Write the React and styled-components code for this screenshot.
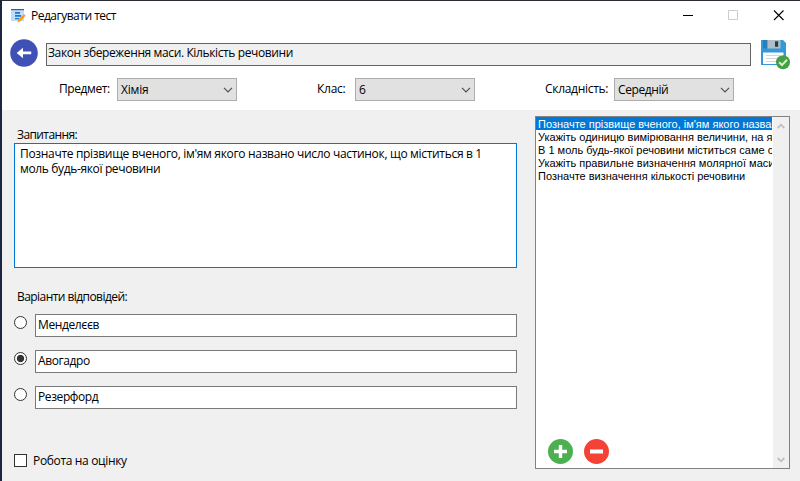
import React from 'react';
import styled, { createGlobalStyle } from 'styled-components';

const GlobalStyle = createGlobalStyle`
  * { box-sizing: border-box; }
  body { margin: 0; overflow: hidden; }
`;

const Window = styled.div`
  width: 800px;
  height: 481px;
  display: flex;
  flex-direction: column;
  border-top: 1px solid #2b2b33;
  border-left: 2px solid #1c2640;
  background: #f0f0f0;
  color: #000;
  font: 12px/15px 'Open Sans', 'Noto Sans', sans-serif;
`;

const Text = styled.span`
  white-space: pre;
  letter-spacing: ${(p) => p.$spacing || 0}px;
`;

const TitleBar = styled.header`
  height: 30px;
  display: flex;
  align-items: flex-start;
  padding: 8px 16px 0 9px;
  background: #fff;
`;

const Title = styled(Text)`
  margin: -1px 0 0 5px;
  flex: 1;
`;

const WindowButtons = styled.div`
  display: flex;
  gap: 34px;
  padding-top: 1px;
  svg { display: block; }
`;

const Header = styled.section`
  height: 79px;
  background: #fff;
`;

const NameRow = styled.div`
  height: 47px;
  display: flex;
  align-items: flex-start;
  padding: 8px 0 0 8px;
  svg { display: block; flex: none; }
`;

const NameField = styled.div`
  width: 705px;
  height: 23px;
  margin: 4px 10px 0 8px;
  padding: 1px 1px;
  border: 1px solid #646464;
  background: #f0f0f0;
`;

const SaveButton = styled.div`
  margin-top: 1px;
`;

const FilterRow = styled.div`
  display: grid;
  grid-template-columns: 58px 200px 38px 190px 69px 120px;
  padding-left: 57px;
`;

const FilterLabel = styled.div`
  padding-top: 3px;
`;

const Select = styled.div`
  width: 120px;
  height: 23px;
  display: flex;
  justify-content: space-between;
  align-items: center;
  padding: 0 3px;
  border: 1px solid #adadad;
  background: #e1e1e1;
`;

const Body = styled.main`
  flex: 1;
  display: flex;
  align-items: flex-start;
  padding: 6px 0 0 12px;
`;

const Editor = styled.section`
  width: 503px;
  margin-right: 18px;
  padding-top: 11px;
`;

const Caption = styled.div`
  height: 16px;
  padding-left: 3px;
`;

const QuestionField = styled.div`
  height: 125px;
  margin-bottom: 21px;
  padding: 2px 5px;
  border: 1px solid #0078d7;
  background: #fff;
  display: flex;
  flex-direction: column;
`;

const Answers = styled.div`
  display: grid;
  gap: 13px;
  margin-top: 9px;
`;

const Answer = styled.div`
  height: 23px;
  display: flex;
  gap: 8px;
`;

const Radio = styled.div`
  width: 13px;
  height: 13px;
  margin-top: 2px;
  border: 1px solid #333;
  border-radius: 50%;
  background: ${(p) => (p.$checked ? 'radial-gradient(circle, #333 3.3px, #fff 4.1px)' : '#fff')};
`;

const AnswerField = styled.div`
  flex: 1;
  padding: 2px;
  border: 1px solid #7a7a7a;
  background: #fff;
`;

const GradeOption = styled.div`
  display: flex;
  align-items: center;
  gap: 6px;
  margin-top: 44px;
`;

const Checkbox = styled.div`
  width: 13px;
  height: 13px;
  border: 1px solid #333;
  background: #fff;
`;

const ListBox = styled.section`
  width: 255px;
  height: 353px;
  display: flex;
  border: 1px solid #828282;
  background: #fff;
`;

const ListPane = styled.div`
  width: 236px;
  display: flex;
  flex-direction: column;
  font: 11px/15px 'Liberation Sans', Arial, sans-serif;
`;

const ListItem = styled.div`
  height: 13px;
  padding-left: 2px;
  overflow: hidden;
  color: ${(p) => (p.$selected ? '#fff' : '#000')};
  background: ${(p) => (p.$selected ? '#0078d7' : 'transparent')};
`;

const ListActions = styled.div`
  display: flex;
  gap: 11px;
  margin-top: auto;
  padding: 0 0 4px 12px;
`;

const ScrollBar = styled.div`
  width: 16px;
  margin-left: 1px;
  display: flex;
  flex-direction: column;
  justify-content: space-between;
  align-items: center;
  padding: 6px 0 5px;
  background: #f0f0f0;
`;

const AppIcon = () => (
  <svg width="15" height="14" viewBox="0 0 15 14">
    <path d="M0 1h13v11H0z" fill="#bbdefb" />
    <path d="M0 0h13v1.2H0z" fill="#3f51b5" />
    <path d="M4 3h5v1.7H4zM4 6h6v1.7H4zM4 9h4v1.3H4z" fill="#1976d2" />
    <path d="M7.2 10.8 12 6l1.7 1.7-4.8 4.8-2.4.7z" fill="#ff9800" />
    <path d="m12 6 .9-.9 1.7 1.6-.9 1z" fill="#e98ba0" />
  </svg>
);

const BackIcon = () => (
  <svg width="28" height="28" viewBox="0 0 28 28">
    <circle cx="14" cy="14" r="13.8" fill="#3f51b5" />
    <path d="M6.7 14 13 8.7v3.9h8.2v2.7H13v4z" fill="#fff" />
  </svg>
);

const SaveIcon = () => (
  <svg width="30" height="30" viewBox="0 0 30 30">
    <path d="M0 0h22l3 3v22H0z" fill="#3498db" />
    <path d="M2 0h4.5v8.5H3L2 7.5z" fill="#2980b9" />
    <path d="M6.5 0h13v8.5h-13z" fill="#b0bec5" />
    <path d="M14 1.3h3.2v5.5H14z" fill="#2d3943" />
    <path d="M2 12.5h20.5V24H2z" fill="#fff" />
    <path d="M5 15.5h14M5 18.5h14M5 21.5h12" stroke="#ced8df" />
    <circle cx="22" cy="22.3" r="7" fill="#43a047" />
    <path d="m18.2 22.3 2.8 2.8 5-5.3" fill="none" stroke="#dcedc8" strokeWidth="2.1" />
  </svg>
);

const Chevron = () => (
  <svg width="10" height="6" viewBox="0 0 10 6">
    <path d="m1 .8 4 4 4-4" fill="none" stroke="#505050" strokeWidth="1.2" />
  </svg>
);

const ScrollArrow = ({ up }) => (
  <svg width="8" height="6" viewBox="0 0 8 6">
    <path d={up ? 'm.7 5 3.3-3.3L7.3 5' : 'm.7 1 3.3 3.3L7.3 1'} fill="none" stroke="#bfbfbf" strokeWidth="1.8" />
  </svg>
);

const RoundAction = ({ color, plus }) => (
  <svg width="25" height="25" viewBox="0 0 25 25">
    <circle cx="12.5" cy="12.5" r="12.5" fill={color} />
    <path d={plus ? 'M6 12.5h13M12.5 6v13' : 'M6 12.5h13'} stroke="#fff" strokeWidth={plus ? 3.4 : 4} />
  </svg>
);

const filters = [
  { label: 'Предмет:', labelSpacing: -0.4, value: 'Хімія', valueSpacing: -0.2 },
  { label: 'Клас:', labelSpacing: -0.25, value: '6' },
  { label: 'Складність:', labelSpacing: -0.3, value: 'Середній', valueSpacing: -0.4 },
];

const answers = [
  { text: 'Менделєєв', spacing: -0.38 },
  { text: 'Авогадро', checked: true, spacing: -0.4 },
  { text: 'Резерфорд', spacing: -0.4 },
];

const questions = [
  "Позначте прізвище вченого, ім'ям якого названо",
  'Укажіть одиницю вимірювання величини, на яку',
  'В 1 моль будь-якої речовини міститься саме стільки',
  'Укажіть правильне визначення молярної маси',
  'Позначте визначення кількості речовини',
];

export default function App() {
  return (
    <>
      <GlobalStyle />
      <Window>
        <TitleBar>
          <AppIcon />
          <Title $spacing={-0.5}>Редагувати тест</Title>
          <WindowButtons>
            <svg width="11" height="11"><path d="M0 5.5h10" stroke="#000" /></svg>
            <svg width="11" height="11"><path d="M.5.5h9v9h-9z" fill="none" stroke="#ccc" /></svg>
            <svg width="11" height="11"><path d="m1 .5 9.5 9.5m0-9.5L1 10" stroke="#000" strokeWidth="1.1" /></svg>
          </WindowButtons>
        </TitleBar>
        <Header>
          <NameRow>
            <BackIcon />
            <NameField><Text $spacing={-0.38}>Закон збереження маси. Кількість речовини</Text></NameField>
            <SaveButton><SaveIcon /></SaveButton>
          </NameRow>
          <FilterRow>
            {filters.map((f) => (
              <React.Fragment key={f.label}>
                <FilterLabel><Text $spacing={f.labelSpacing}>{f.label}</Text></FilterLabel>
                <Select><Text $spacing={f.valueSpacing}>{f.value}</Text><Chevron /></Select>
              </React.Fragment>
            ))}
          </FilterRow>
        </Header>
        <Body>
          <Editor>
            <Caption><Text $spacing={-0.6}>Запитання:</Text></Caption>
            <QuestionField>
              <Text $spacing={-0.32}>Позначте прізвище вченого, ім'ям якого названо число частинок, що міститься в 1</Text>
              <Text $spacing={-0.36}>моль будь-якої речовини</Text>
            </QuestionField>
            <Caption><Text $spacing={-0.56}>Варіанти відповідей:</Text></Caption>
            <Answers>
              {answers.map((a) => (
                <Answer key={a.text}>
                  <Radio $checked={a.checked} />
                  <AnswerField><Text $spacing={a.spacing}>{a.text}</Text></AnswerField>
                </Answer>
              ))}
            </Answers>
            <GradeOption>
              <Checkbox />
              <Text $spacing={-0.34}>Робота на оцінку</Text>
            </GradeOption>
          </Editor>
          <ListBox>
            <ListPane>
              {questions.map((q, i) => (
                <ListItem key={q} $selected={i === 0}><Text>{q}</Text></ListItem>
              ))}
              <ListActions>
                <RoundAction color="#4caf50" plus />
                <RoundAction color="#f44336" />
              </ListActions>
            </ListPane>
            <ScrollBar>
              <ScrollArrow up />
              <ScrollArrow />
            </ScrollBar>
          </ListBox>
        </Body>
      </Window>
    </>
  );
}
